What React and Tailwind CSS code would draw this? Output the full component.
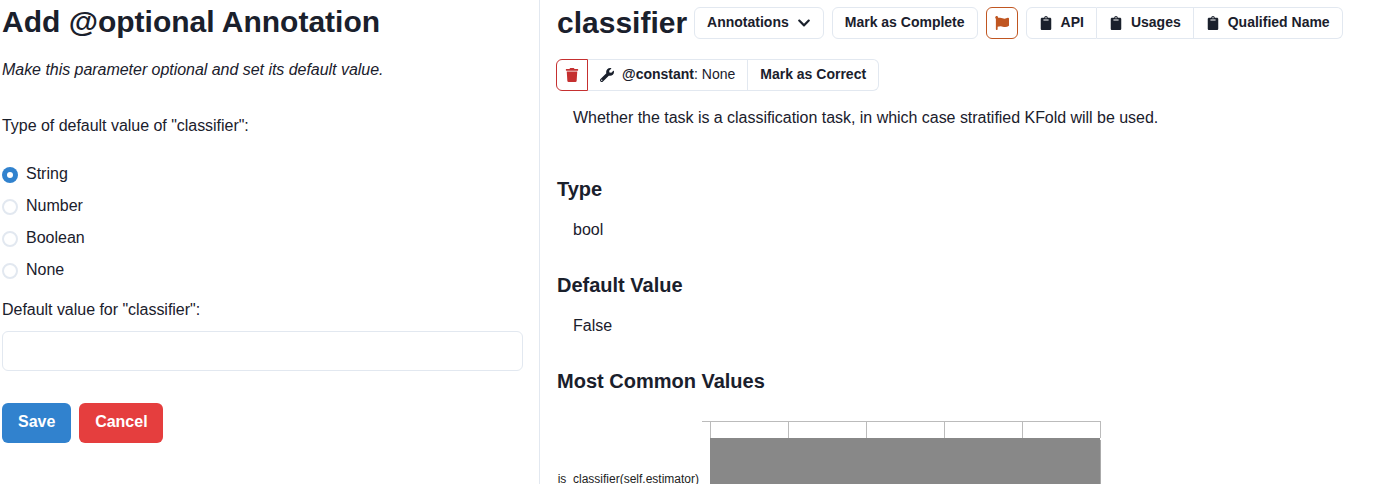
import React from 'react'
import { FaChevronDown, FaClipboard, FaFlag, FaTrash, FaWrench } from 'react-icons/fa'

const btn = 'h-8 px-3 flex items-center text-sm leading-[1.2] font-bold text-[#1a202c] bg-white border border-[#e2e8f0]'

// button text sits a pixel above the icons
function Label({ children }) {
  return <span className="block pb-0.5">{children}</span>
}

function Radio({ label, checked }) {
  return (
    <label className="flex items-center h-6 mb-2 last:mb-0">
      {checked ? (
        <span className="w-4 h-4 mt-0.5 rounded-full bg-[#3182ce] flex items-center justify-center mr-2 shrink-0">
          <span className="w-1.5 h-1.5 rounded-full bg-white" />
        </span>
      ) : (
        <span className="w-4 h-4 mt-0.5 rounded-full border-2 border-[#e2e8f0] mr-2 shrink-0" />
      )}
      {label}
    </label>
  )
}

function Section({ title, children }) {
  return (
    <div>
      <h3 className="text-xl font-bold leading-6 mb-[17px]">{title}</h3>
      {children}
    </div>
  )
}

function Chart() {
  const ticks = [710, 788, 866, 944, 1022, 1100]
  return (
    <div className="pt-[4px]">
      <svg className="block" width="545" height="70" viewBox="557 414 545 70">
        <line x1="702" x2="710" y1="421.5" y2="421.5" stroke="#bbb" />
        <line x1="710" x2="1101" y1="421.5" y2="421.5" stroke="#bbb" />
        {ticks.map(x => (
          <line key={x} x1={x + 0.5} x2={x + 0.5} y1="421" y2="438" stroke="#bbb" />
        ))}
        <rect x="710" y="438" width="390" height="46" fill="#888" />
        <line x1="1100.5" x2="1100.5" y1="440" y2="484" stroke="#aaa" />
        <text x="699" y="483" textAnchor="end" fontSize="12" fontFamily="Liberation Sans, Arial, sans-serif" fill="#222">
          is_classifier(self.estimator)
        </text>
      </svg>
    </div>
  )
}

export default function App() {
  return (
    <div className="h-[484px] overflow-hidden flex bg-white text-[#1a202c] font-['Liberation_Sans',Arial,sans-serif] leading-6 [text-rendering:optimizeLegibility] antialiased">
      <div className="w-[540px] shrink-0 border-r border-[#e2e8f0] pl-[2px] pr-4">
        <h2 className="text-[30px] font-bold leading-9 mt-1 mb-[18px]">Add @optional Annotation</h2>
        <p className="italic mb-8 tracking-[-0.035px]">Make this parameter optional and set its default value.</p>
        <p className="mb-6 tracking-[-0.03px]">Type of default value of "classifier":</p>
        <div className="mb-4">
          <Radio label="String" checked />
          <Radio label="Number" />
          <Radio label="Boolean" />
          <Radio label="None" />
        </div>
        <p className="mb-[9px] tracking-[-0.03px]">Default value for "classifier":</p>
        <input className="w-full h-10 rounded-md border border-[#e2e8f0] px-4 mb-8 block outline-none" />
        <div className="flex gap-2">
          <button className="h-10 px-4 pb-0.5 rounded-md bg-[#3182ce] text-white font-bold leading-[1.2]">Save</button>
          <button className="h-10 w-[84px] pb-0.5 rounded-md bg-[#e53e3e] text-white font-bold leading-[1.2]">Cancel</button>
        </div>
      </div>

      <div className="flex-1 pl-[17px] min-w-0">
        <div className="flex items-center gap-2 mt-[7px]">
          <h1 className="text-[30px] font-bold leading-8 -mr-px">classifier</h1>
          <button className={`${btn} rounded-md gap-2`}>
            <Label>Annotations</Label>
            <FaChevronDown className="w-3.5 h-3.5" />
          </button>
          <button className={`${btn} rounded-md`}><Label>Mark as Complete</Label></button>
          <button className="w-8 h-8 flex items-center justify-center rounded-md border border-[#c05621] text-[#c05621]">
            <FaFlag className="w-3.5 h-3.5" />
          </button>
          <div className="flex">
            <button className={`${btn} rounded-l-md gap-2`}><FaClipboard className="w-3.5 h-3.5" /><Label>API</Label></button>
            <button className={`${btn} border-l-0 gap-2`}><FaClipboard className="w-3.5 h-3.5" /><Label>Usages</Label></button>
            <button className={`${btn} border-l-0 rounded-r-md gap-2`}><FaClipboard className="w-3.5 h-3.5" /><Label>Qualified Name</Label></button>
          </div>
        </div>

        <div className="flex mt-5 -ml-px">
          <button className="w-8 h-8 flex items-center justify-center rounded-l-md border border-[#c53030] text-[#c53030]">
            <FaTrash className="w-3.5 h-3.5" />
          </button>
          <button className={`${btn} border-l-0 gap-2 font-normal`}>
            <FaWrench className="w-3.5 h-3.5" />
            <Label><b>@constant</b>: None</Label>
          </button>
          <button className={`${btn} border-l-0 rounded-r-md`}><Label>Mark as Correct</Label></button>
        </div>

        <p className="pl-4 mt-[15px] mb-[47px] tracking-[-0.03px]">Whether the task is a classification task, in which case stratified KFold will be used.</p>

        <div className="flex flex-col gap-[31px]">
          <Section title="Type"><p className="pl-4">bool</p></Section>
          <Section title="Default Value"><p className="pl-4">False</p></Section>
          <Section title="Most Common Values"><Chart /></Section>
        </div>
      </div>
    </div>
  )
}
